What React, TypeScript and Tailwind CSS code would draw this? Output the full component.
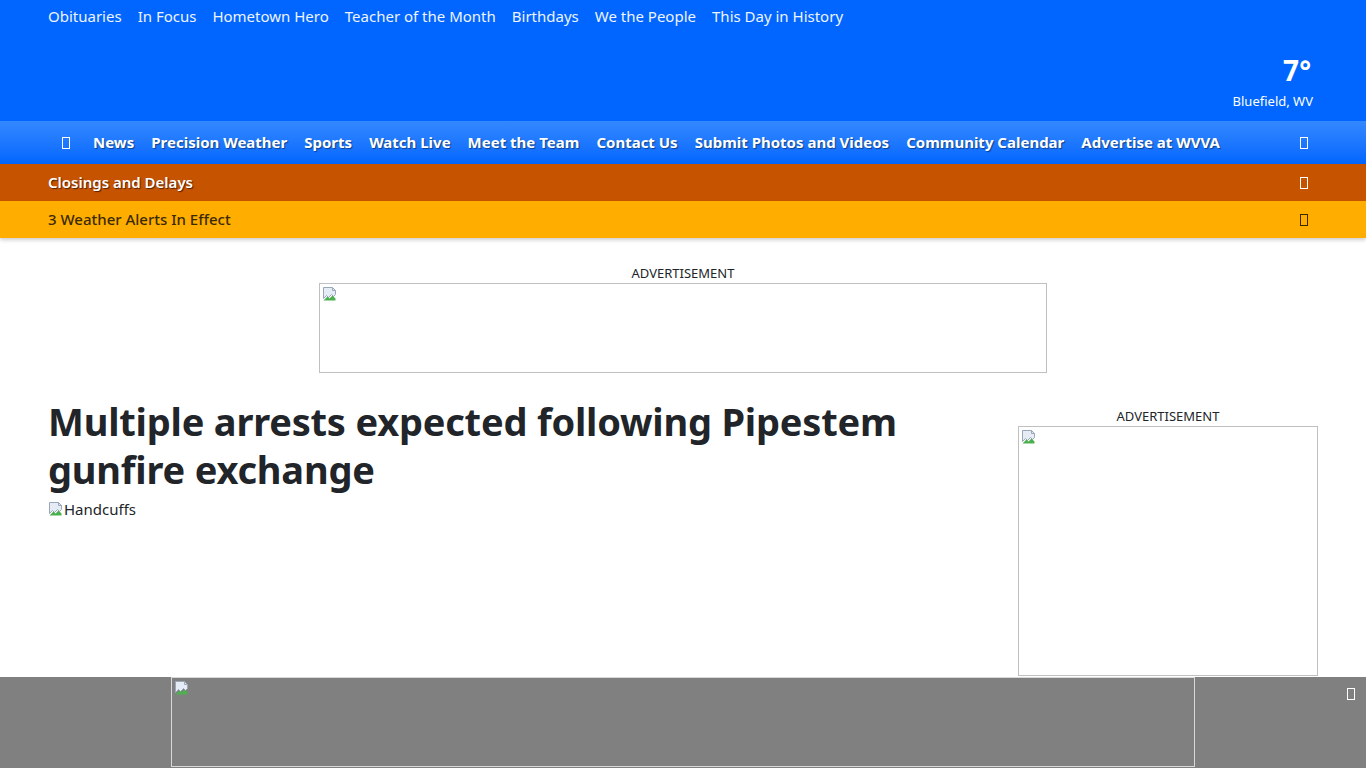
import React from 'react';

const font = { fontFamily: '"Noto Sans", "Open Sans", sans-serif' };

function Tofu({ className = '' }: { className?: string }) {
  return <span className={`inline-block w-[8px] h-[12px] border ${className}`} />;
}

function BrokenImg() {
  return (
    <svg width="16" height="16" viewBox="0 0 16 16" className="shrink-0">
      <path d="M1.5 1.5h9l3 3v4l-2 2-2-2-3 3-2-2-3 3z" fill="#e6ecf5" stroke="#9aa7b8" />
      <path d="M1.5 14.5l4-4 2 2 3-3 3 3v2z" fill="#4caf50" />
      <path d="M10.5 1.5v3h3" fill="none" stroke="#9aa7b8" />
    </svg>
  );
}

const topLinks = ['Obituaries', 'In Focus', 'Hometown Hero', 'Teacher of the Month', 'Birthdays', 'We the People', 'This Day in History'];
const navLinks = ['News', 'Precision Weather', 'Sports', 'Watch Live', 'Meet the Team', 'Contact Us', 'Submit Photos and Videos', 'Community Calendar', 'Advertise at WVVA'];

export default function App() {
  return (
    <div className="min-h-[768px] bg-white text-[#212529]" style={font}>
      <header className="bg-[#0066ff] h-[121px] px-12 flex flex-col">
        <div className="flex gap-4 pt-[5px] text-[15px] text-[#eef4ff]">
          {topLinks.map((l) => (
            <a key={l}>{l}</a>
          ))}
        </div>
        <div className="ml-auto mr-[5px] mt-[25px] flex flex-col items-end text-white">
          <div className="text-[28px] font-bold leading-[34px] mr-[2px]">7°</div>
          <div className="text-[13px] leading-[18px] mt-[5px]">Bluefield, WV</div>
        </div>
      </header>

      <nav className="h-[43px] bg-gradient-to-b from-[#3388ff] to-[#0066ff] flex items-center pl-[62px] pr-[58px] text-white font-bold text-[15px] [text-shadow:1px_1px_1px_rgba(0,0,0,0.45)]">
        <Tofu className="border-white mr-[23px]" />
        <div className="flex gap-[17px]">
          {navLinks.map((l) => (
            <a key={l}>{l}</a>
          ))}
        </div>
        <Tofu className="border-white ml-auto" />
      </nav>

      <div className="shadow-[0_2px_4px_rgba(0,0,0,0.2)]">
        <div className="h-[37px] bg-[#c65300] flex items-center px-12 text-white font-semibold text-[15px] [text-shadow:1px_1px_1px_rgba(0,0,0,0.6)]">
          <span>Closings and Delays</span>
          <Tofu className="border-white ml-auto mr-[10px]" />
        </div>
        <div className="h-[37px] bg-[#ffae00] flex items-center px-12 text-[#3b2a00] font-medium text-[15px]">
          <span>3 Weather Alerts In Effect</span>
          <Tofu className="border-[#3b2a00] ml-auto mr-[10px]" />
        </div>
      </div>

      <div className="flex flex-col items-center mt-[27px]">
        <div className="text-[13px] leading-[16px] pb-[2px] text-[#212529]">ADVERTISEMENT</div>
        <div className="w-[728px] h-[90px] border border-[#c0c0c0] p-[2px]">
          <BrokenImg />
        </div>
      </div>

      <main className="flex px-12 mt-[24px] gap-6">
        <div className="flex-1">
          <h1 className="text-[38px] font-bold leading-[48px] text-[#212529] max-w-[900px] tracking-[-0.2px]">
            Multiple arrests expected following Pipestem gunfire exchange
          </h1>
          <div className="flex items-center text-[15px] mt-[5px]">
            <BrokenImg />
            <span>Handcuffs</span>
          </div>
        </div>
        <aside className="w-[300px] flex flex-col items-center mt-[11px]">
          <div className="text-[13px] leading-[16px] pb-[2px]">ADVERTISEMENT</div>
          <div className="w-[300px] h-[250px] border border-[#c0c0c0] p-[2px]">
            <BrokenImg />
          </div>
        </aside>
      </main>

      <div className="fixed bottom-0 left-0 right-0 h-[91px] bg-[#808080] flex justify-center">
        <div className="w-[1024px] h-[90px] border border-[#d8d8d8] p-[2px]">
          <BrokenImg />
        </div>
        <div className="absolute right-[11px] top-[10px] -translate-y-[5px]">
          <Tofu className="border-white" />
        </div>
      </div>
    </div>
  );
}
